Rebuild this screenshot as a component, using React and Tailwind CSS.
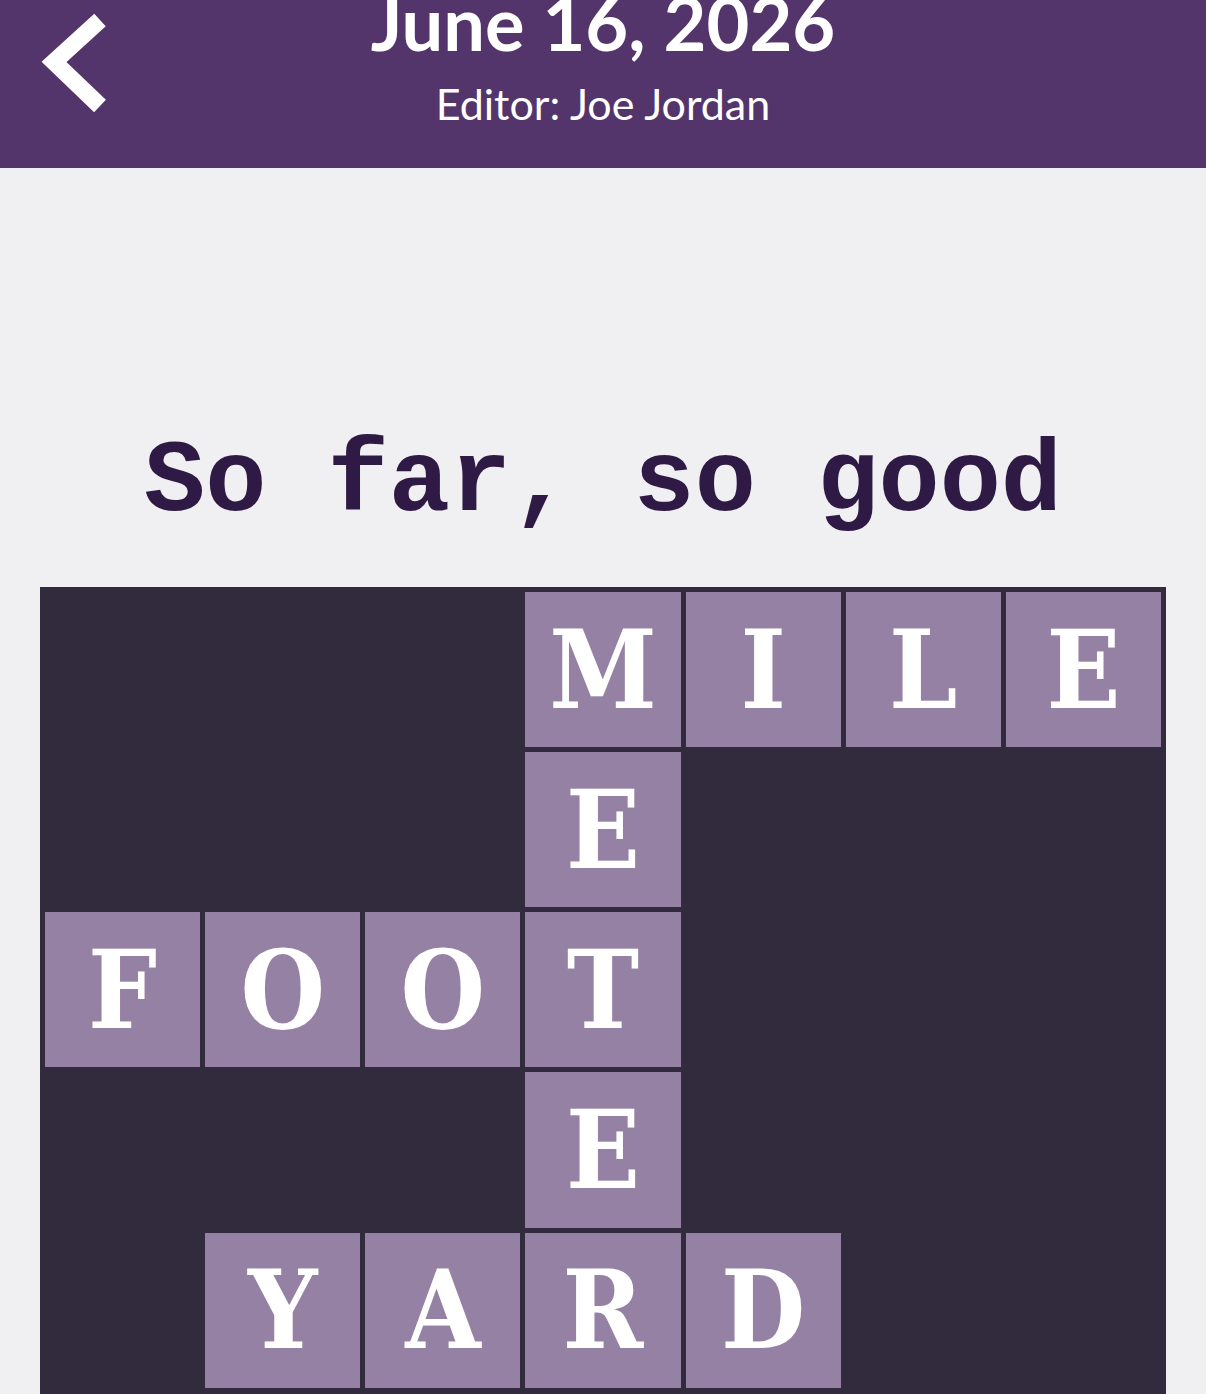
import React from "react";

const rows = [
  ["", "", "", "M", "I", "L", "E"],
  ["", "", "", "E", "", "", ""],
  ["F", "O", "O", "T", "", "", ""],
  ["", "", "", "E", "", "", ""],
  ["", "Y", "A", "R", "D", "", ""],
  ["", "", "", "", "", "", ""],
  ["", "", "", "", "", "", ""],
];

const Header = () => {
  return (
    <header className="bg-[#53346b] h-[168px] relative flex flex-col items-center overflow-hidden">
      <button className="absolute left-[34px] top-[10px] w-[80px] h-[106px]">
        <svg viewBox="0 0 80 106" className="w-full h-full">
          <polyline
            points="66,10 20,52 66,96"
            fill="none"
            stroke="#fff"
            strokeWidth="17"
            strokeLinejoin="miter"
            strokeLinecap="butt"
          />
        </svg>
      </button>
      <h1
        className="mt-[-14px] text-[74px] leading-none font-bold text-white"
        style={{ fontFamily: "Lato, 'Open Sans', sans-serif" }}
      >
        June 16, 2026
      </h1>
      <p
        className="mt-[22px] text-[43px] leading-none text-white"
        style={{ fontFamily: "Lato, 'Open Sans', sans-serif" }}
      >
        Editor: Joe Jordan
      </p>
    </header>
  );
};

const App = () => {
  return (
    <div className="min-h-screen bg-[#f0f0f2] overflow-hidden">
      <Header />
      <h2
        className="mt-[264px] text-center text-[102px] leading-none font-bold text-[#2e1a45]"
        style={{ fontFamily: "'Liberation Mono', 'Courier New', monospace" }}
      >
        So far, so good
      </h2>
      <div className="mt-[53px] ml-[40px] w-[1126px] bg-[#322a3d] p-[5px] grid grid-cols-7 gap-[5px]">
        {rows.flat().map((ch, i) => (
          <div
            key={i}
            className={`aspect-square flex items-center justify-center ${
              ch ? "bg-[#9581a3]" : "bg-[#322a3d]"
            }`}
          >
            {ch && (
              <span
                className="text-[108px] leading-none font-bold font-stretch-condensed text-white"
                style={{ fontFamily: "'DejaVu Serif Condensed', 'DejaVu Serif', serif" }}
              >
                {ch}
              </span>
            )}
          </div>
        ))}
      </div>
    </div>
  );
};

export default App;
